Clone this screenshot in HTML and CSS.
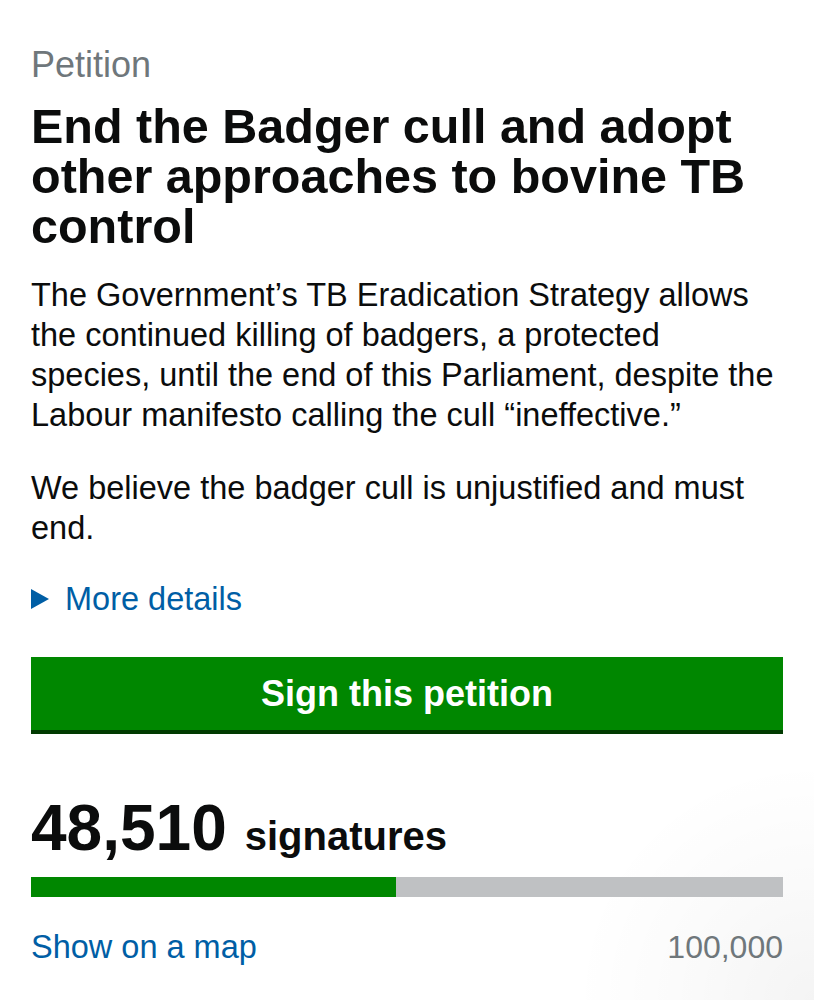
FILE: index.html
```html
<!DOCTYPE html>
<html lang="en">
<head>
<meta charset="utf-8">
<title>Petition: End the Badger cull</title>
<link rel="stylesheet" href="styles.css">
</head>
<body>
<main class="page">
  <span class="caption">Petition</span>
  <h1 class="title">End the Badger cull and adopt other approaches to bovine TB control</h1>
  <p class="body-text">The Government’s TB Eradication Strategy allows the continued killing of badgers, a protected species, until the end of this Parliament, despite the Labour manifesto calling the cull “ineffective.”</p>
  <p class="body-text second">We believe the badger cull is unjustified and must end.</p>
  <div class="details">
    <svg class="arrow" width="18" height="20" viewBox="0 0 18 20" aria-hidden="true"><polygon points="0,0 18,10 0,20" fill="#005ea5"/></svg>
    <a class="link" href="#">More details</a>
  </div>
  <a class="button" href="#">Sign this petition</a>
  <div class="count">
    <span class="count-num">48,510</span>
    <span class="count-label">signatures</span>
  </div>
  <div class="bar"><div class="bar-fill" style="width:48.51%"></div></div>
  <div class="bar-meta">
    <a class="link" href="#">Show on a map</a>
    <span class="target">100,000</span>
  </div>
</main>
</body>
</html>
```

FILE: styles.css
```css
html, body {
  margin: 0;
  padding: 0;
}
body {
  font-family: "Liberation Sans", Arial, Helvetica, sans-serif;
  color: #0b0c0c;
  background: #ffffff;
  width: 814px;
  height: 1000px;
  overflow: hidden;
  background-image: radial-gradient(circle at 100% 100%, rgba(0,0,0,0.045) 0, rgba(0,0,0,0.02) 120px, rgba(0,0,0,0) 240px);
}
.page {
  width: 752px;
  padding: 45px 31px 0 31px;
  display: flex;
  flex-direction: column;
}
.caption {
  display: block;
  font-size: 36px;
  line-height: 40px;
  color: #6f777b;
}
.title {
  margin: 16px 0 0 0;
  font-size: 48.5px;
  line-height: 50px;
  font-weight: 700;
}
.body-text {
  margin: 24px 0 0 0;
  font-size: 32.5px;
  line-height: 40px;
}
.body-text.second {
  margin-top: 33px;
}
.details {
  margin-top: 31px;
  display: flex;
  align-items: center;
  gap: 16px;
  height: 40px;
}
.arrow {
  display: block;
  flex: none;
}
.link {
  color: #005ea5;
  text-decoration: none;
  font-size: 32.5px;
  line-height: 40px;
}
.button {
  margin-top: 38px;
  display: flex;
  align-items: center;
  justify-content: center;
  height: 73px;
  background: #008700;
  box-shadow: 0 4px 0 #003a00;
  color: #ffffff;
  font-size: 36px;
  font-weight: 700;
  text-decoration: none;
}
.count {
  margin-top: 63px;
  display: flex;
  align-items: baseline;
  gap: 18px;
  height: 70px;
}
.count-num {
  font-size: 64px;
  line-height: 70px;
  font-weight: 700;
}
.count-label {
  font-size: 40px;
  font-weight: 700;
}
.bar {
  margin-top: 14px;
  height: 20px;
  background: #bfc1c3;
}
.bar-fill {
  height: 100%;
  background: #008700;
}
.bar-meta {
  margin-top: 30px;
  display: flex;
  justify-content: space-between;
  align-items: baseline;
}
.target {
  font-size: 32px;
  line-height: 40px;
  color: #6f777b;
}
```
